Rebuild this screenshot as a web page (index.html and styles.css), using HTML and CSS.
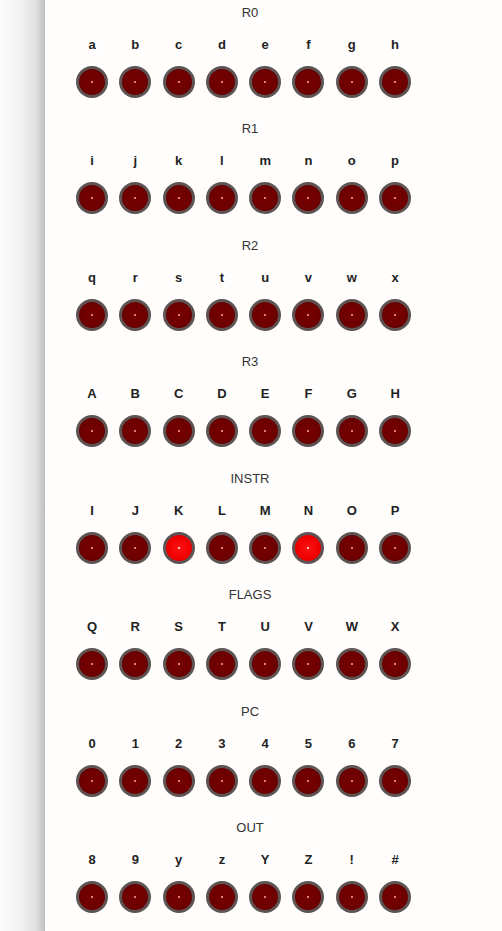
FILE: index.html
```html
<!DOCTYPE html>
<html lang="en">
<head>
  <meta charset="UTF-8">
  <title>Register LEDs</title>
  <link rel="stylesheet" href="styles.css">
</head>
<body>
  <div class="side"></div>

  <!-- LED panel -->
  <div class="panel" id="panel"></div>

  <script>
    const groups = [
      { name: "R0", keys: "abcdefgh" },
      { name: "R1", keys: "ijklmnop" },
      { name: "R2", keys: "qrstuvwx" },
      { name: "R3", keys: "ABCDEFGH" },
      { name: "INSTR", keys: "IJKLMNOP", on: [2, 5] },
      { name: "FLAGS", keys: "QRSTUVWX" },
      { name: "PC", keys: "01234567" },
      { name: "OUT", keys: "89yzYZ!#" }
    ];

    const panel = document.getElementById("panel");

    groups.forEach(g => {
      const sec = document.createElement("div");
      sec.className = "group";

      const title = document.createElement("div");
      title.className = "title";
      title.innerText = g.name;
      sec.appendChild(title);

      const labels = document.createElement("div");
      labels.className = "row labels";
      const leds = document.createElement("div");
      leds.className = "row leds";

      g.keys.split("").forEach((k, i) => {
        const l = document.createElement("span");
        l.innerText = k;
        labels.appendChild(l);

        const cell = document.createElement("span");
        const led = document.createElement("div");
        led.className = "led";
        if (g.on && g.on.includes(i)) led.classList.add("on");
        cell.appendChild(led);
        leds.appendChild(cell);
      });

      sec.appendChild(labels);
      sec.appendChild(leds);
      panel.appendChild(sec);
    });
  </script>
</body>
</html>
```

FILE: styles.css
```css
* { margin: 0; padding: 0; box-sizing: border-box; }
body {
  font-family: "Liberation Sans", Arial, sans-serif;
  display: flex;
  height: 100vh;
  overflow: hidden;
  background: #fbfbfa;
}
.side {
  width: 45px;
  flex-shrink: 0;
  background: linear-gradient(to right, #fbfbfb 0%, #f3f3f3 45%, #e0e0e0 80%, #c0c0c0 100%);
}
.panel {
  flex: 1;
  background: #fffefd;
}
.group {
  height: 116.43px;
  padding-top: 5px;
}
.title {
  width: 410px;
  text-align: center;
  font-size: 13px;
  line-height: 16px;
  color: #333;
}
.row {
  display: grid;
  grid-template-columns: repeat(8, 43.3px);
  padding-left: 25.35px;
}
.labels {
  margin-top: 16px;
  font-size: 13px;
  font-weight: bold;
  line-height: 16px;
  color: #222;
  text-align: center;
}
.leds {
  margin-top: 13px;
}
.leds span {
  display: flex;
  justify-content: center;
}
.led {
  position: relative;
  width: 32px;
  height: 32px;
  border-radius: 50%;
  border: 3px solid #5e5454;
  background: radial-gradient(circle, #780000 0%, #6c0000 65%, #4a0000 100%);
}
.led::after {
  content: "";
  position: absolute;
  left: 12px;
  top: 12px;
  width: 2px;
  height: 2px;
  border-radius: 50%;
  background: #f0b0b0;
}
.led.on {
  background: radial-gradient(circle, #ff1414 0%, #f00000 60%, #c40000 100%);
}
.led.on::after {
  background: #fff;
}
```
